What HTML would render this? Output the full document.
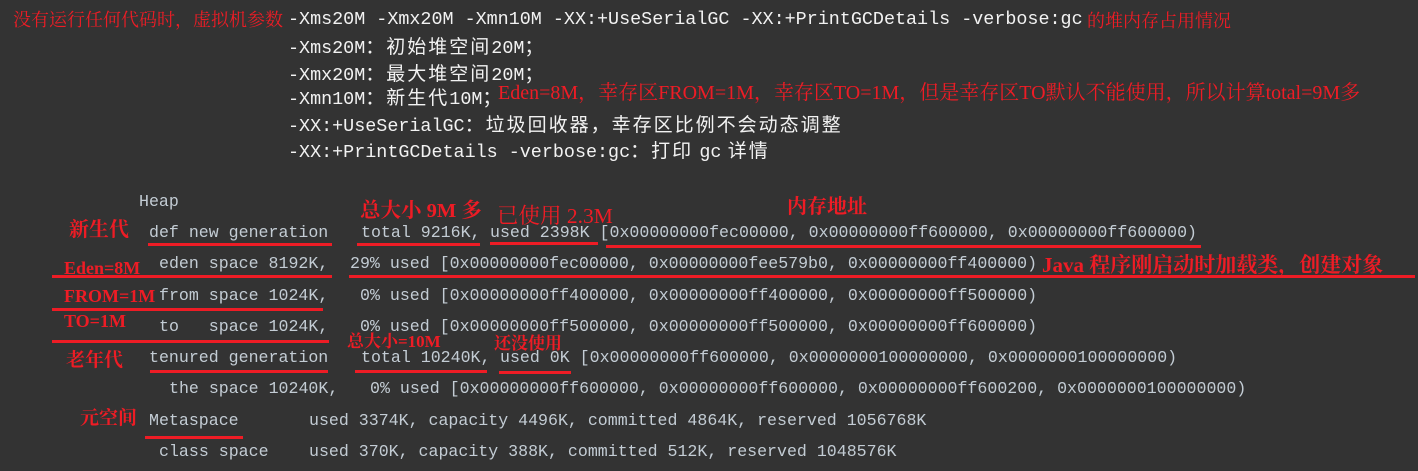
<!DOCTYPE html>
<html><head><meta charset="utf-8"><style>
body{margin:0;width:1418px;height:471px;background:#333333;overflow:hidden;position:relative;font-family:"Liberation Mono","Noto Sans CJK SC",monospace}
.t{position:absolute;white-space:pre;line-height:22px;height:22px;font-size:18.4px;color:#f2f2f2}
.t .c{font-family:"Noto Sans CJK SC",sans-serif;font-size:19px;letter-spacing:2px}
.g{position:absolute;white-space:pre;line-height:22px;font-size:16.6px;color:#c3ccd4}
.r{position:absolute;white-space:pre;line-height:22px;color:#ee1c25;font-family:"Liberation Serif","Noto Serif CJK SC",serif;font-size:17px}
.b{font-weight:bold}
.u{position:absolute;height:3px;background:#ee1c25}
</style></head><body>
<div class="r" style="left:13px;top:9px;font-size:18px">没有运行任何代码时，虚拟机参数</div>
<div class="t" style="left:288px;top:9px">-Xms20M -Xmx20M -Xmn10M -XX:+UseSerialGC -XX:+PrintGCDetails -verbose:gc</div>
<div class="r" style="left:1087px;top:10px;font-size:18px">的堆内存占用情况</div>
<div class="t" style="left:288px;top:35px">-Xms20M<span class="c">：初始堆空间</span>20M<span class="c">；</span></div>
<div class="t" style="left:288px;top:62px">-Xmx20M<span class="c">：最大堆空间</span>20M<span class="c">；</span></div>
<div class="t" style="left:288px;top:86px">-Xmn10M<span class="c">：新生代</span>10M<span class="c">；</span></div>
<div class="r" style="left:498px;top:82px;font-size:20px">Eden=8M，幸存区FROM=1M，幸存区TO=1M，但是幸存区TO默认不能使用，所以计算total=9M多</div>
<div class="t" style="left:288px;top:113px">-XX:+UseSerialGC<span class="c">：垃圾回收器，幸存区比例不会动态调整</span></div>
<div class="t" style="left:288px;top:139px">-XX:+PrintGCDetails -verbose:gc<span class="c">：打印 </span>gc<span class="c"> 详情</span></div>

<div class="g" style="left:139px;top:191px">Heap</div>
<div class="g" style="left:149px;top:222px">def new generation</div>
<div class="g" style="left:361px;top:222px">total 9216K,</div>
<div class="g" style="left:490px;top:222px">used 2398K [0x00000000fec00000, 0x00000000ff600000, 0x00000000ff600000)</div>
<div class="g" style="left:159px;top:253px">eden space 8192K,</div>
<div class="g" style="left:350px;top:253px">29% used [0x00000000fec00000, 0x00000000fee579b0, 0x00000000ff400000)</div>
<div class="g" style="left:159px;top:285px">from space 1024K,</div>
<div class="g" style="left:360px;top:285px">0% used [0x00000000ff400000, 0x00000000ff400000, 0x00000000ff500000)</div>
<div class="g" style="left:159px;top:316px">to   space 1024K,</div>
<div class="g" style="left:360px;top:316px">0% used [0x00000000ff500000, 0x00000000ff500000, 0x00000000ff600000)</div>
<div class="g" style="left:149px;top:347px">tenured generation</div>
<div class="g" style="left:361px;top:347px">total 10240K,</div>
<div class="g" style="left:500px;top:347px">used 0K [0x00000000ff600000, 0x0000000100000000, 0x0000000100000000)</div>
<div class="g" style="left:169px;top:378px">the space 10240K,</div>
<div class="g" style="left:370px;top:378px">0% used [0x00000000ff600000, 0x00000000ff600000, 0x00000000ff600200, 0x0000000100000000)</div>
<div class="g" style="left:149px;top:410px">Metaspace</div>
<div class="g" style="left:309px;top:410px">used 3374K, capacity 4496K, committed 4864K, reserved 1056768K</div>
<div class="g" style="left:159px;top:441px">class space</div>
<div class="g" style="left:309px;top:441px">used 370K, capacity 388K, committed 512K, reserved 1048576K</div>

<div class="r b" style="left:69px;top:219px;font-size:20px">新生代</div>
<div class="r b" style="left:64px;top:257px;font-size:18px">Eden=8M</div>
<div class="r b" style="left:64px;top:285px;font-size:18px">FROM=1M</div>
<div class="r b" style="left:64px;top:310px;font-size:18px">TO=1M</div>
<div class="r b" style="left:66px;top:350px;font-size:19px">老年代</div>
<div class="r b" style="left:80px;top:408px;font-size:19px">元空间</div>
<div class="r b" style="left:360px;top:200px;font-size:20.5px">总大小 9M 多</div>
<div class="r" style="left:497px;top:205px;font-size:21.5px">已使用 2.3M</div>
<div class="r b" style="left:787px;top:196px;font-size:20px">内存地址</div>
<div class="r b" style="left:1042px;top:254px;font-size:21px">Java 程序刚启动时加载类，创建对象</div>
<div class="r b" style="left:347px;top:331px;font-size:17px">总大小=10M</div>
<div class="r b" style="left:494px;top:333px;font-size:17px">还没使用</div>

<div class="u" style="left:148px;width:184px;top:243px"></div>
<div class="u" style="left:357px;width:123px;top:243px"></div>
<div class="u" style="left:490px;width:108px;top:242px"></div>
<div class="u" style="left:606px;width:595px;top:245px"></div>
<div class="u" style="left:52px;width:280px;top:275px"></div>
<div class="u" style="left:349px;width:1066px;top:275px"></div>
<div class="u" style="left:52px;width:271px;top:308px"></div>
<div class="u" style="left:52px;width:277px;top:340px"></div>
<div class="u" style="left:150px;width:178px;top:370px"></div>
<div class="u" style="left:355px;width:132px;top:370px"></div>
<div class="u" style="left:499px;width:72px;top:371px"></div>
<div class="u" style="left:145px;width:98px;top:436px"></div>
</body></html>
